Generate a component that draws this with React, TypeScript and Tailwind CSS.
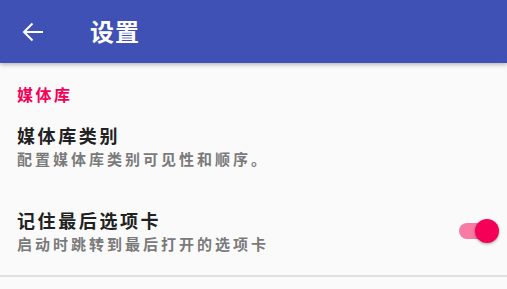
import React, { useState } from "react";

const cjk = { fontFamily: '"Noto Sans CJK SC", "Noto Sans", sans-serif' };

export default function App() {
  const [remember, setRemember] = useState(true);

  return (
    <div className="w-[507px] h-[289px] bg-[#fafafa] overflow-hidden" style={cjk}>
      {/* 顶栏 */}
      <div className="h-[63px] bg-[#3f51b5] flex items-center shadow-[0_2px_4px_rgba(0,0,0,0.25)] relative z-10">
        <div className="w-[90px] pl-[22px] flex items-center">
          <svg width="22" height="20" viewBox="0 0 22 20" fill="none" stroke="white" strokeWidth="2">
            <path d="M21 10H2" />
            <path d="M10.5 1.5L2 10l8.5 8.5" />
          </svg>
        </div>
        <h1 className="text-white text-[24px] font-bold tracking-[1px] leading-none -mt-[1px]">设置</h1>
      </div>

      {/* 列表 */}
      <div className="px-[17px]">
        <div className="pt-[21px] text-[16px] leading-[20px] font-bold tracking-[2.5px] text-[#f50057]">媒体库</div>

        <div className="pt-[19px]">
          <div className="text-[18px] leading-[24px] font-bold tracking-[2.6px] text-[#212121]">媒体库类别</div>
          <div className="mt-[2px] text-[15px] leading-[20px] font-bold tracking-[3px] text-[#7a7a7a]">配置媒体库类别可见性和顺序。</div>
        </div>

        <div className="pt-[39px] flex items-center -mr-[10px]">
          <div className="flex-1">
            <div className="text-[18px] leading-[24px] font-bold tracking-[2.6px] text-[#212121]">记住最后选项卡</div>
            <div className="mt-[2px] text-[15px] leading-[20px] font-bold tracking-[3px] text-[#7a7a7a]">启动时跳转到最后打开的选项卡</div>
          </div>
          <button
            onClick={() => setRemember(!remember)}
            className="relative w-[41px] h-[26px] flex items-center"
          >
            <span className={`block w-[36px] h-[16px] rounded-full ${remember ? "bg-[#f77ba3]" : "bg-[#bdbdbd]"}`} />
            <span
              className={`absolute top-[1px] w-[24px] h-[24px] rounded-full shadow-[0_1px_3px_rgba(0,0,0,0.35)] ${remember ? "left-[16px] bg-[#f50057]" : "left-0 bg-[#f1f1f1]"}`}
            />
          </button>
        </div>
      </div>

      <div className="mt-[21px] h-[2px] bg-[#e0e0e0]" />
    </div>
  );
}
